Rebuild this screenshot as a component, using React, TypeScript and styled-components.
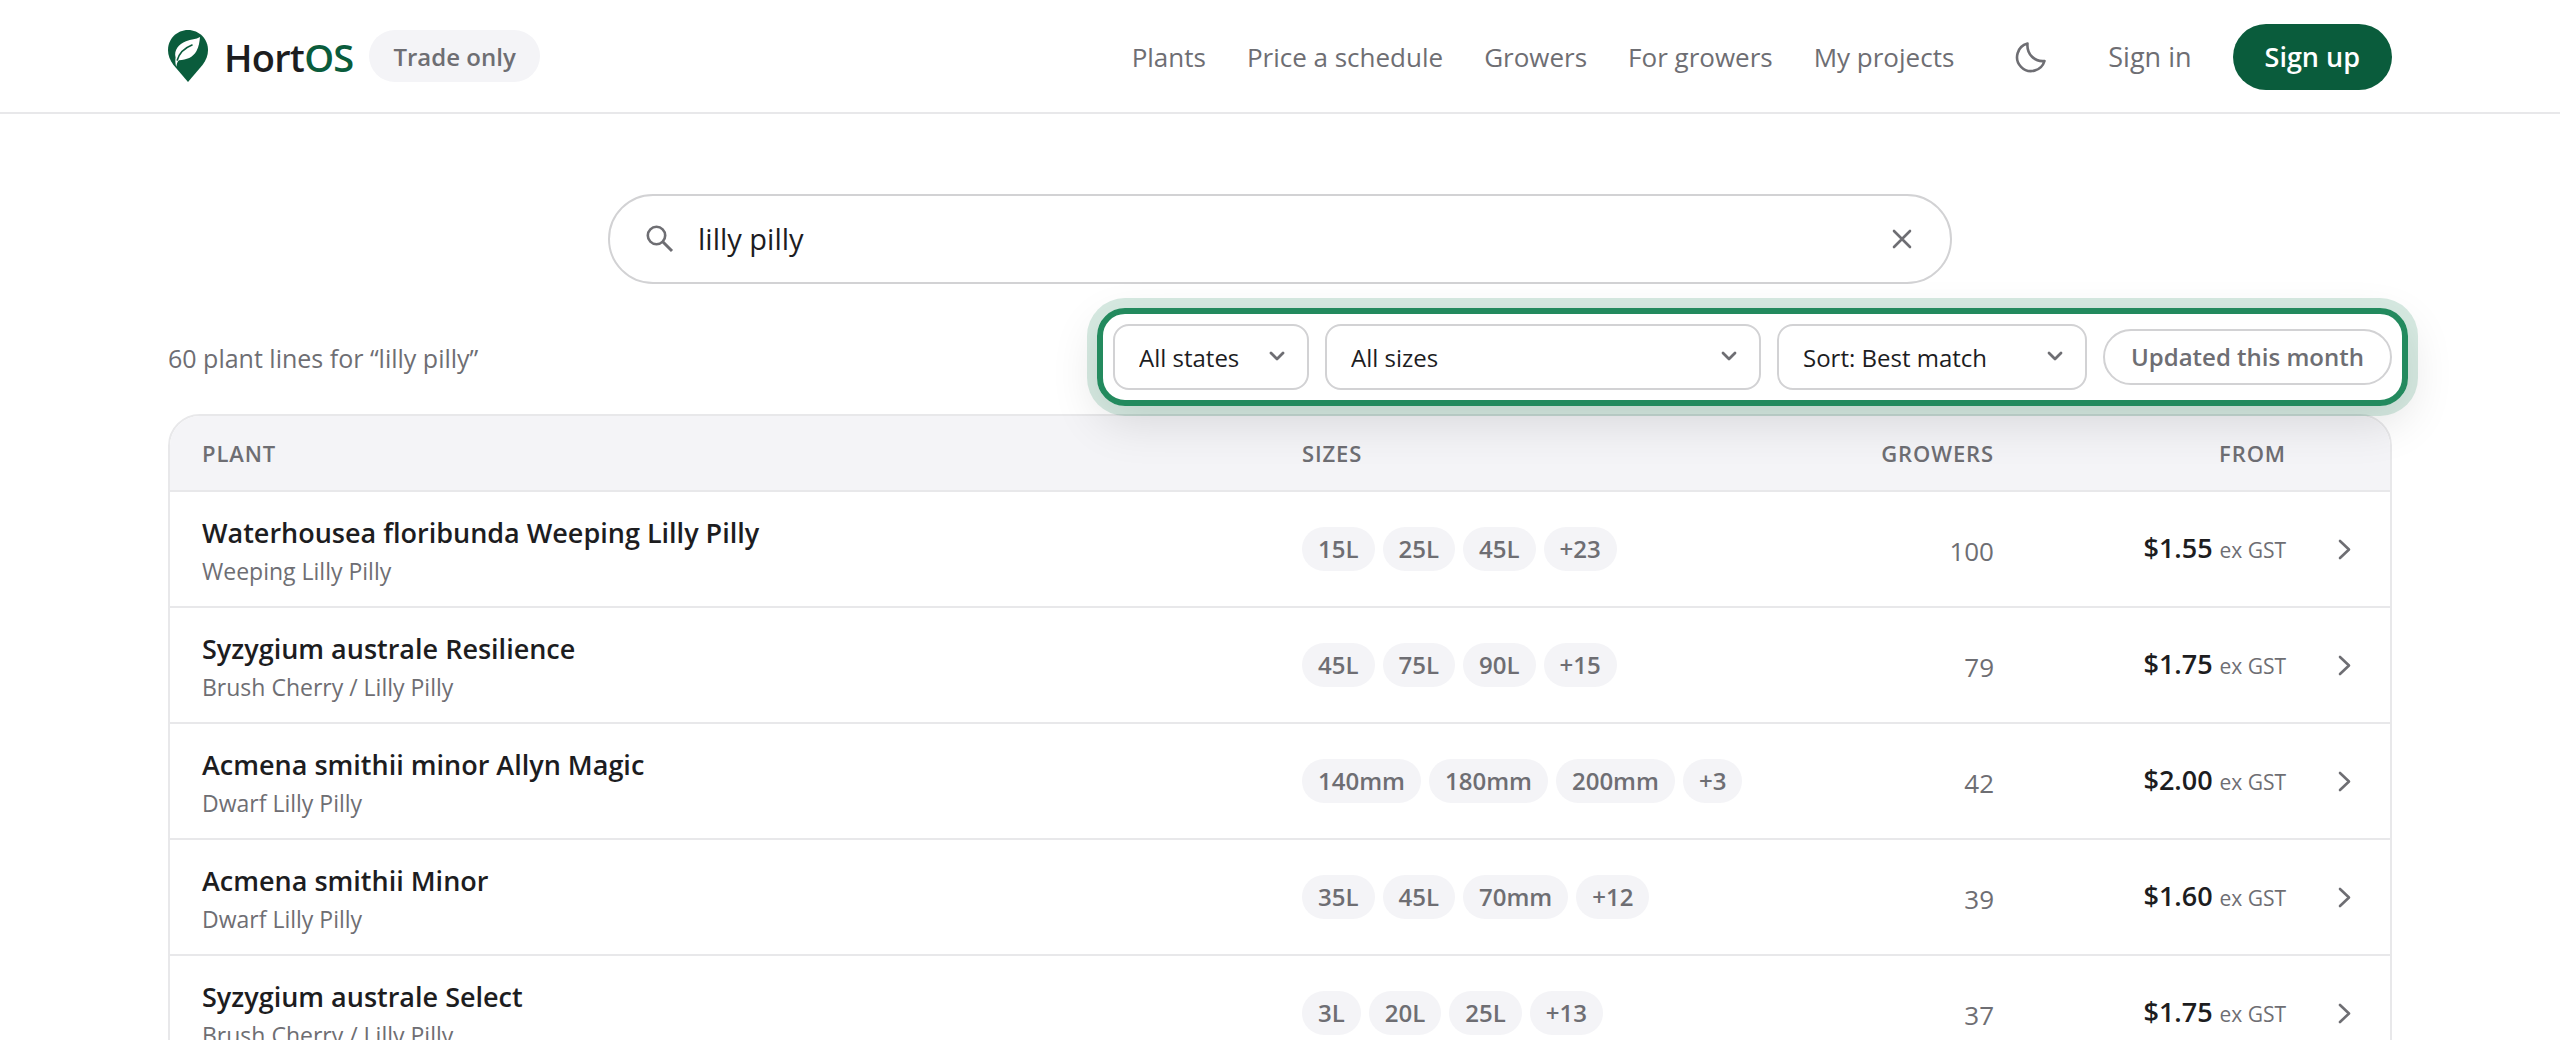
import React, { useState } from "react";
import styled, { createGlobalStyle, css } from "styled-components";

const color = {
  ink: "#1d1d1f",
  muted: "#6e6e73",
  brand: "#0a5c3c",
  ring: "#238a5e",
  line: "#e8e8ea",
  control: "#d2d2d4",
  wash: "#f4f4f7",
};

const GlobalStyle = createGlobalStyle`
  *, *::before, *::after { box-sizing: border-box; }
  body {
    margin: 0;
    background: #fff;
    color: ${color.ink};
    font-family: "Segoe UI", "Open Sans", "Noto Sans", sans-serif;
    font-size: 26px;
    line-height: 36px;
  }
  button, input, select { font: inherit; color: inherit; }
`;

const container = css`
  width: calc(100% - 48px);
  max-width: 2224px;
  margin: 0 auto;
`;

const Header = styled.header`
  border-bottom: 2px solid ${color.line};
`;

const HeaderInner = styled.div`
  ${container}
  display: flex;
  align-items: center;
  justify-content: space-between;
  min-height: 112px;
`;

const Brand = styled.div`
  display: flex;
  align-items: center;
  gap: 16px;
`;

const Home = styled.a`
  display: flex;
  align-items: center;
  gap: 16px;
  color: ${color.ink};
  font-size: 38px;
  font-weight: 600;
  line-height: 48px;
  letter-spacing: -0.02em;
  text-decoration: none;
`;

const Wordmark = styled.span`
  padding-top: 2px;
`;

const Accent = styled.span`
  color: ${color.brand};
`;

const Badge = styled.span`
  padding: 9px 24px 7px;
  border-radius: 26px;
  background: ${color.wash};
  color: ${color.muted};
  font-size: 24px;
  font-weight: 600;
`;

const Nav = styled.nav`
  display: flex;
  align-items: center;
  gap: 41px;
  padding-top: 2px;
`;

const NavLink = styled.a`
  color: ${color.muted};
  font-size: 26px;
  text-decoration: none;
`;

const SignIn = styled(NavLink)`
  font-size: 27px;
`;

const IconButton = styled.button`
  display: grid;
  place-items: center;
  width: 72px;
  height: 72px;
  padding: 0;
  border: 0;
  background: none;
  color: ${color.muted};
`;

const SignUp = styled.a`
  padding: 15px 32px;
  border-radius: 33px;
  background: ${color.brand};
  color: #fff;
  font-size: 27px;
  font-weight: 600;
  text-decoration: none;
`;

const Main = styled.main`
  ${container}
  padding-top: 80px;
`;

const Search = styled.form`
  display: flex;
  align-items: center;
  gap: 24px;
  max-width: 1344px;
  height: 90px;
  margin: 0 auto;
  padding: 0 12px 0 36px;
  border: 2px solid ${color.control};
  border-radius: 45px;
  color: ${color.muted};
`;

const SearchInput = styled.input`
  flex: 1;
  min-width: 0;
  padding: 0;
  border: 0;
  outline: 0;
  background: none;
  color: ${color.ink};
  font-size: 29px;
`;

const Toolbar = styled.div`
  display: flex;
  align-items: center;
  justify-content: space-between;
  margin: 24px -16px 8px 0;
`;

const Count = styled.p`
  margin: 0;
  padding-top: 2px;
  color: ${color.muted};
  font-size: 25px;
`;

const Filters = styled.div`
  position: relative;
  z-index: 1;
  display: flex;
  align-items: center;
  gap: 16px;
  padding: 10px;
  border: 6px solid ${color.ring};
  border-radius: 28px;
  box-shadow:
    0 0 0 10px rgba(35, 138, 94, 0.18),
    0 16px 48px rgba(0, 0, 0, 0.12);
`;

const SelectBox = styled.label<{ $width: number }>`
  position: relative;
  display: flex;
  width: ${(p) => p.$width}px;
  color: ${color.muted};
`;

const Select = styled.select`
  appearance: none;
  width: 100%;
  height: 66px;
  padding: 2px 48px 0 24px;
  border: 2px solid ${color.control};
  border-radius: 16px;
  background: #fff;
  color: ${color.ink};
  font-size: 24px;
`;

const SelectArrow = styled.svg`
  position: absolute;
  top: 24px;
  right: 22px;
  pointer-events: none;
`;

const Toggle = styled.button`
  height: 56px;
  padding: 0 26px;
  border: 2px solid ${color.control};
  border-radius: 28px;
  background: #fff;
  color: ${color.muted};
  font-size: 24px;
  font-weight: 600;
  white-space: nowrap;
`;

const Card = styled.div`
  overflow: hidden;
  border: 2px solid ${color.line};
  border-radius: 32px;
`;

const Table = styled.table`
  width: 100%;
  border-collapse: separate;
  border-spacing: 0;
  table-layout: fixed;
`;

const HeadCell = styled.th<{ $width?: number; $end?: boolean }>`
  width: ${(p) => (p.$width ? `${p.$width}px` : "auto")};
  height: 76px;
  padding: 0 24px;
  border-bottom: 2px solid ${color.line};
  background: ${color.wash};
  color: ${color.muted};
  font-size: 22px;
  font-weight: 600;
  letter-spacing: 0.04em;
  text-align: ${(p) => (p.$end ? "right" : "left")};
  text-transform: uppercase;

  &:first-child { padding-left: 32px; }
`;

const Cell = styled.td<{ $end?: boolean }>`
  height: 116px;
  padding: 0 24px;
  border-bottom: 2px solid ${color.line};
  color: ${color.muted};
  text-align: ${(p) => (p.$end ? "right" : "left")};
  white-space: nowrap;
`;

const PlantCell = styled(Cell)`
  padding: 4px 24px 0 32px;
`;

const CountCell = styled(Cell)`
  padding-top: 4px;
`;

const PlantName = styled.a`
  display: block;
  color: ${color.ink};
  font-size: 27px;
  font-weight: 600;
  line-height: 40px;
  text-decoration: none;
`;

const CommonName = styled.div`
  font-size: 23px;
`;

const Chips = styled.div`
  display: flex;
  gap: 8px;
`;

const Chip = styled.span`
  padding: 4px 16px;
  border-radius: 22px;
  background: ${color.wash};
  font-size: 24px;
  font-weight: 600;
`;

const Price = styled.strong`
  color: ${color.ink};
  font-size: 27px;
  font-weight: 600;
`;

const Tax = styled.span`
  font-size: 21px;
`;

const Arrow = styled.svg`
  display: block;
`;

const Logo = () => (
  <svg width="40" height="52" viewBox="0 0 40 52" aria-hidden="true">
    <path
      fill={color.brand}
      d="M20 0C8.900 0 0 8.900 0 20c0 5.500 2 10.300 5.300 14.800L20 52l14.700-17.200C38 30.300 40 25.500 40 20 40 8.900 31.100 0 20 0Z"
    />
    <path
      fill="#fff"
      d="M32 7c-4 2.500-9 2.200-14 4.200C10.500 14.300 5.800 20 7.600 27.500c-.5 3-.3 6 .7 9.300.5-3 1.200-5.300 2.700-6.500C18.500 29.800 25 27.500 28.500 21 31 16.300 31.500 11.500 32 7Z"
    />
    <path
      fill="none"
      stroke={color.brand}
      strokeWidth="1.600"
      strokeLinecap="round"
      d="M24 15C16.500 18 11.500 22.500 9.300 30"
    />
  </svg>
);

const plants = [
  { name: "Waterhousea floribunda Weeping Lilly Pilly", common: "Weeping Lilly Pilly", sizes: ["15L", "25L", "45L", "+23"], growers: 100, from: "$1.55" },
  { name: "Syzygium australe Resilience", common: "Brush Cherry / Lilly Pilly", sizes: ["45L", "75L", "90L", "+15"], growers: 79, from: "$1.75" },
  { name: "Acmena smithii minor Allyn Magic", common: "Dwarf Lilly Pilly", sizes: ["140mm", "180mm", "200mm", "+3"], growers: 42, from: "$2.00" },
  { name: "Acmena smithii Minor", common: "Dwarf Lilly Pilly", sizes: ["35L", "45L", "70mm", "+12"], growers: 39, from: "$1.60" },
  { name: "Syzygium australe Select", common: "Brush Cherry / Lilly Pilly", sizes: ["3L", "20L", "25L", "+13"], growers: 37, from: "$1.75" },
];

const filters = [
  { label: "State", value: "All states", width: 196 },
  { label: "Size", value: "All sizes", width: 436 },
  { label: "Sort", value: "Sort: Best match", width: 310 },
];

export default function App() {
  const [query, setQuery] = useState("lilly pilly");

  return (
    <>
      <GlobalStyle />
      <Header>
        <HeaderInner>
          <Brand>
            <Home href="#">
              <Logo />
              <Wordmark>Hort<Accent>OS</Accent></Wordmark>
            </Home>
            <Badge>Trade only</Badge>
          </Brand>
          <Nav>
            {["Plants", "Price a schedule", "Growers", "For growers", "My projects"].map((item) => (
              <NavLink key={item} href="#">{item}</NavLink>
            ))}
            <IconButton type="button" aria-label="Dark mode">
              <svg width="32" height="32" viewBox="0 0 32 32" fill="none" stroke="currentColor" strokeWidth="2.600" strokeLinejoin="round" aria-hidden="true">
                <path d="M12.500 2.500A14 14 0 1 0 29.500 20C20 21 11.500 13.500 12.500 2.500Z" />
              </svg>
            </IconButton>
            <SignIn href="#">Sign in</SignIn>
            <SignUp href="#">Sign up</SignUp>
          </Nav>
        </HeaderInner>
      </Header>

      <Main>
        <Search role="search" onSubmit={(e) => e.preventDefault()}>
          <svg width="28" height="28" viewBox="0 0 28 28" fill="none" stroke="currentColor" strokeWidth="2.600" aria-hidden="true">
            <circle cx="10.500" cy="10.500" r="8.700" />
            <path d="M17 17l9 9" strokeWidth="3" />
          </svg>
          <SearchInput aria-label="Search plants" value={query} onChange={(e) => setQuery(e.target.value)} />
          <IconButton type="button" aria-label="Clear search" onClick={() => setQuery("")}>
            <svg width="20" height="20" viewBox="0 0 20 20" fill="none" stroke="currentColor" strokeWidth="2.600" strokeLinecap="round" aria-hidden="true">
              <path d="M2 2l16 16M18 2L2 18" />
            </svg>
          </IconButton>
        </Search>

        <Toolbar>
          <Count>60 plant lines for “lilly pilly”</Count>
          <Filters>
            {filters.map((f) => (
              <SelectBox key={f.label} $width={f.width}>
                <Select aria-label={f.label}>
                  <option>{f.value}</option>
                </Select>
                <SelectArrow width="20" height="16" viewBox="0 0 20 16" fill="none" stroke="currentColor" strokeWidth="2.800" strokeLinecap="round" strokeLinejoin="round" aria-hidden="true">
                  <path d="M4 5l6 6 6-6" />
                </SelectArrow>
              </SelectBox>
            ))}
            <Toggle type="button">Updated this month</Toggle>
          </Filters>
        </Toolbar>

        <Card>
          <Table>
            <thead>
              <tr>
                <HeadCell>Plant</HeadCell>
                <HeadCell $width={490}>Sizes</HeadCell>
                <HeadCell $width={250} $end>Growers</HeadCell>
                <HeadCell $width={292} $end>From</HeadCell>
                <HeadCell $width={80} aria-label="Open" />
              </tr>
            </thead>
            <tbody>
              {plants.map((p) => (
                <tr key={p.name}>
                  <PlantCell>
                    <PlantName href="#">{p.name}</PlantName>
                    <CommonName>{p.common}</CommonName>
                  </PlantCell>
                  <Cell>
                    <Chips>{p.sizes.map((s) => <Chip key={s}>{s}</Chip>)}</Chips>
                  </Cell>
                  <CountCell $end>{p.growers}</CountCell>
                  <Cell $end><Price>{p.from}</Price> <Tax>ex GST</Tax></Cell>
                  <Cell>
                    <Arrow width="22" height="22" viewBox="0 0 22 22" fill="none" stroke="currentColor" strokeWidth="2.600" strokeLinecap="round" strokeLinejoin="round" aria-hidden="true">
                      <path d="M6 3l9 8.500L6 20" />
                    </Arrow>
                  </Cell>
                </tr>
              ))}
            </tbody>
          </Table>
        </Card>
      </Main>
    </>
  );
}
